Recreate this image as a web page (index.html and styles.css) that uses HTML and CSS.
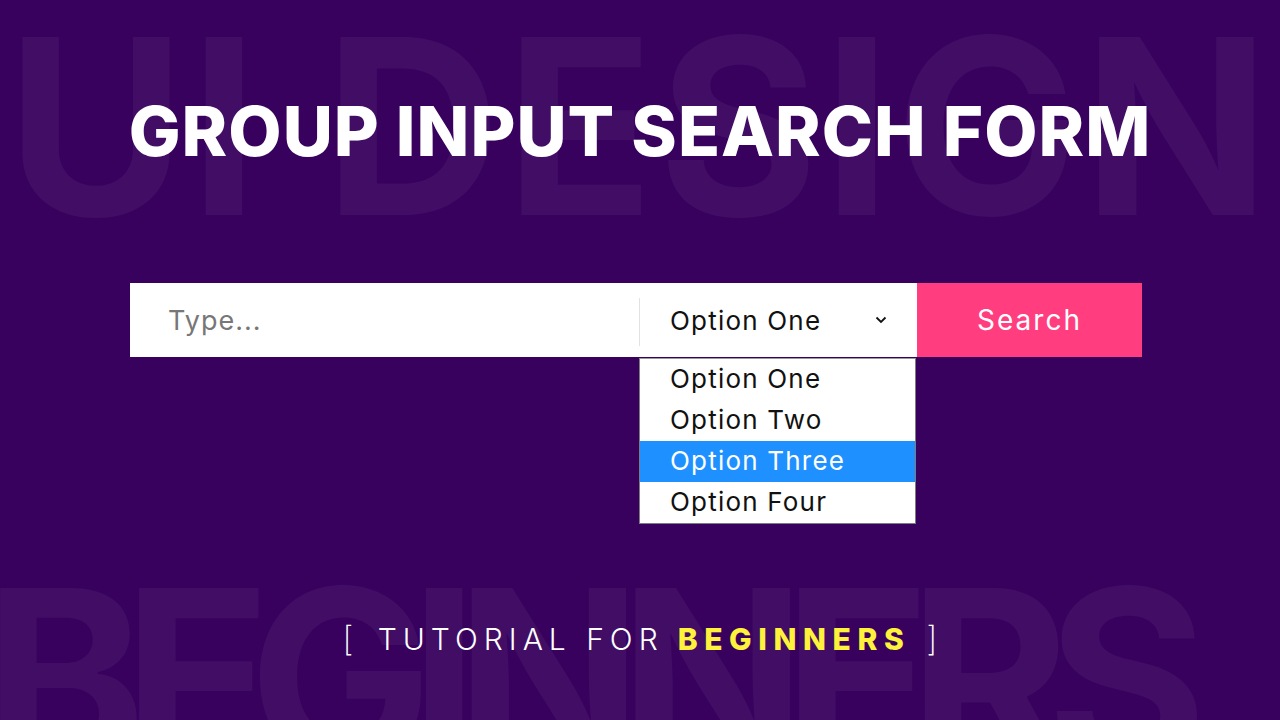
FILE: index.html
```html
<!DOCTYPE html>
<html lang="en">
<head>
    <meta charset="UTF-8">
    <meta name="viewport" content="width=device-width, initial-scale=1.0">
    <title>Group Input Search Form</title>
    <link rel="stylesheet" href="styles.css">
</head>
<body>
    <div class="page">
        <!-- faint words behind everything -->
        <div class="bg-word bg-top">UI DESIGN</div>
        <div class="bg-word bg-bottom">BEGINNERS</div>

        <h1 class="title">GROUP INPUT SEARCH FORM</h1>

        <form class="search-form">
            <input class="search-input" type="text" placeholder="Type...">
            <div class="select">
                <span class="select-value">Option One</span>
                <svg class="chevron" width="12" height="8" viewBox="0 0 12 8">
                    <path d="M1.5 1.5 L6 6 L10.5 1.5" fill="none" stroke="#111" stroke-width="1.8"/>
                </svg>
                <ul class="select-list">
                    <li>Option One</li>
                    <li>Option Two</li>
                    <li class="active">Option Three</li>
                    <li>Option Four</li>
                </ul>
            </div>
            <button class="search-btn" type="button">Search</button>
        </form>

        <p class="tagline">
            <span class="bracket bracket-open">[</span>
            <span class="tag-light">TUTORIAL FOR</span>
            <span class="tag-bold">BEGINNERS</span>
            <span class="bracket">]</span>
        </p>
    </div>
</body>
</html>
```

FILE: styles.css
```css
body {
    margin: 0;
    background-color: #37015d;
    font-family: Inter, "Noto Sans", sans-serif;
    overflow: hidden;
}
.page {
    position: relative;
    height: 720px;
    display: flex;
    flex-direction: column;
    align-items: center;
    overflow: hidden;
}
.bg-word {
    position: absolute;
    left: 0;
    right: 0;
    text-align: center;
    font-size: 245px;
    line-height: 1;
    font-weight: 700;
    color: rgba(255, 255, 255, 0.05);
    white-space: nowrap;
    pointer-events: none;
}
.bg-top {
    top: 4px;
    letter-spacing: 4px;
}
.bg-bottom {
    top: 555px;
    letter-spacing: -23px;
    left: -112px;
}
.title {
    position: relative;
    margin: 97px 0 0;
    font-size: 69px;
    line-height: 1;
    font-weight: 800;
    color: #fff;
    letter-spacing: 1px;
    white-space: nowrap;
}
.search-form {
    position: relative;
    display: flex;
    width: 1012px;
    height: 74px;
    margin: 117px 8px 0 0;
    background-color: #fff;
}
.search-input {
    flex: 1;
    border: none;
    outline: none;
    padding: 0 0 0 38px;
    font-family: inherit;
    font-size: 27px;
    letter-spacing: 1px;
    color: #333;
    background: transparent;
}
.search-input::placeholder {
    color: #777;
}
.select {
    position: relative;
    width: 278px;
    display: flex;
    align-items: center;
    padding-left: 31px;
    box-sizing: border-box;
    font-size: 26px;
    letter-spacing: 1.2px;
    color: #111;
}
.select::before {
    content: "";
    position: absolute;
    left: 0;
    top: 15px;
    bottom: 11px;
    width: 1px;
    background-color: #e2e2e2;
}
.chevron {
    position: absolute;
    right: 30px;
    top: 33px;
}
.select-list {
    position: absolute;
    top: 75px;
    left: 0;
    width: 277px;
    margin: 0;
    padding: 0;
    list-style: none;
    background-color: #fff;
    border: 1px solid #7d7d7d;
    border-top-color: #999;
    box-sizing: border-box;
}
.select-list li {
    height: 41px;
    line-height: 39px;
    padding-left: 30px;
    font-size: 26px;
    color: #111;
}
.select-list li.active {
    background-color: #1e90ff;
    color: #fff;
}
.search-btn {
    width: 225px;
    border: none;
    background-color: #ff3d7f;
    color: #fff;
    font-family: inherit;
    font-size: 28px;
    letter-spacing: 2px;
    cursor: pointer;
}
.tagline {
    position: relative;
    display: flex;
    align-items: center;
    margin: 265px 0 0;
    font-size: 30px;
    line-height: 1;
    color: #fff;
}
.bracket {
    font-weight: 200;
    font-size: 34px;
}
.bracket-open {
    margin-right: 24px;
}
.tag-light {
    font-weight: 300;
    letter-spacing: 6px;
    margin-right: 14px;
}
.tag-bold {
    font-weight: 800;
    color: #fff23b;
    letter-spacing: 6.6px;
    margin-right: 16px;
}
```
